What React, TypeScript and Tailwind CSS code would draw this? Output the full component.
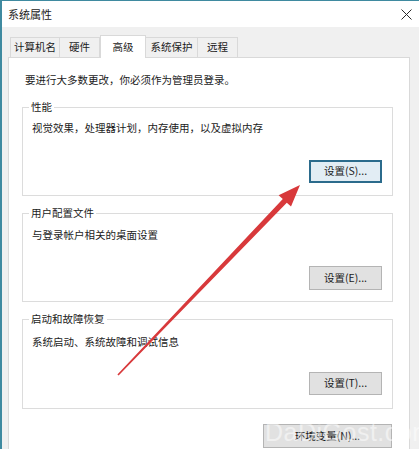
import React from "react";

const font = {
  fontFamily: '"Noto Sans CJK SC", "Noto Sans", sans-serif',
};

type BtnProps = { label: string; focused?: boolean; className?: string };

function Btn({ label, focused, className = "" }: BtnProps) {
  return (
    <div
      className={
        "flex items-center justify-center text-[10.5px] leading-none text-[#1b1b1b] " +
        (focused
          ? "border-2 border-[#2b6b8c] bg-[#e2edf4] "
          : "border border-[#b4b4b4] bg-[#e1e1e1] ") +
        className
      }
    >
      {label}
    </div>
  );
}

type GroupProps = {
  title: string;
  text: string;
  button: React.ReactNode;
  className: string;
};

function Group({ title, text, button, className }: GroupProps) {
  return (
    <div
      className={
        "relative ml-[13px] flex w-[371px] shrink-0 flex-col border border-[#dcdcdc] pl-[9px] " +
        className
      }
    >
      <span className="absolute left-[6px] top-[-9px] bg-white px-[2px] text-[10.5px] leading-[16px] text-[#1b1b1b]">
        {title}
      </span>
      <div className="text-[10.5px] leading-[16px] text-[#1b1b1b]">{text}</div>
      <div className="flex flex-1 items-end justify-end">{button}</div>
    </div>
  );
}

const tabs = [
  { label: "计算机名", w: "w-[50px]" },
  { label: "硬件", w: "w-[40px]" },
  { label: "高级", w: "w-[46px]", active: true },
  { label: "系统保护", w: "w-[52px]" },
  { label: "远程", w: "w-[40px]" },
];

export default function App() {
  return (
    <div
      style={font}
      className="relative flex h-[449px] w-[419px] flex-col overflow-hidden border-l-2 border-t border-[#3f8aa0] bg-[#f0f0f0]"
    >
      {/* title bar */}
      <div className="flex h-[26px] shrink-0 items-center justify-between bg-white pl-[6px] pr-[7px]">
        <span className="text-[11px] leading-none text-[#1b1b1b]">系统属性</span>
        <svg width="11" height="11" viewBox="0 0 11 11">
          <path d="M0.5 0.5 L10.5 10.5 M10.5 0.5 L0.5 10.5" stroke="#2a2a2a" strokeWidth="1" />
        </svg>
      </div>

      {/* tab strip */}
      <div className="ml-[8px] mt-[8px] flex h-[22px] shrink-0 items-end">
        {tabs.map((t) =>
          t.active ? (
            <div
              key={t.label}
              className={
                "relative z-10 mb-[-1px] flex h-[23px] items-start justify-center border border-b-0 border-[#d9d9d9] bg-white pt-[3px] text-[10.5px] leading-[16px] text-[#1b1b1b] " +
                t.w
              }
            >
              {t.label}
            </div>
          ) : (
            <div
              key={t.label}
              className={
                "flex h-[20px] items-center justify-center border border-b-0 border-l-0 first:border-l border-[#d9d9d9] bg-[#f0f0f0] text-[10.5px] leading-none text-[#1b1b1b] " +
                t.w
              }
            >
              {t.label}
            </div>
          )
        )}
      </div>

      {/* page body */}
      <div className="ml-[6px] flex h-[420px] w-[402px] shrink-0 flex-col border border-[#d9d9d9] bg-white">
        <div className="ml-[16px] mt-[14px] shrink-0 text-[10.5px] leading-[16px] text-[#1b1b1b]">
          要进行大多数更改，你必须作为管理员登录。
        </div>

        <Group
          title="性能"
          text="视觉效果，处理器计划，内存使用，以及虚拟内存"
          className="mt-[19px] h-[89px] pt-[12px]"
          button={<Btn label="设置(S)..." focused className="mb-[12px] mr-[10px] h-[23px] w-[73px]" />}
        />
        <Group
          title="用户配置文件"
          text="与登录帐户相关的桌面设置"
          className="mt-[17px] h-[89px] pt-[13px]"
          button={<Btn label="设置(E)..." className="mb-[11px] mr-[10px] h-[24px] w-[73px]" />}
        />
        <Group
          title="启动和故障恢复"
          text="系统启动、系统故障和调试信息"
          className="mt-[17px] h-[90px] pt-[14px]"
          button={<Btn label="设置(T)..." className="mb-[13px] mr-[10px] h-[23px] w-[73px]" />}
        />

        <div className="mr-[17px] mt-[15px] flex shrink-0 justify-end">
          <Btn label="环境变量(N)..." className="h-[24px] w-[129px]" />
        </div>
      </div>

      {/* red pointer arrow */}
      <svg
        className="pointer-events-none absolute left-[-2px] top-[-1px]"
        width="419"
        height="449"
        viewBox="0 0 419 449"
      >
        <polygon
          points="117.4,374.6 118.6,375.4 286.8,202.8 291,206.6 300,185 278.6,195.2 282.8,199"
          fill="#d8393b"
        />
      </svg>

      {/* site watermark */}
      <span className="pointer-events-none absolute left-[263px] top-[419px] font-['Liberation_Sans'] text-[25px] leading-none tracking-[0.5px] text-white opacity-50">
        DaDiGost.com
      </span>
    </div>
  );
}
